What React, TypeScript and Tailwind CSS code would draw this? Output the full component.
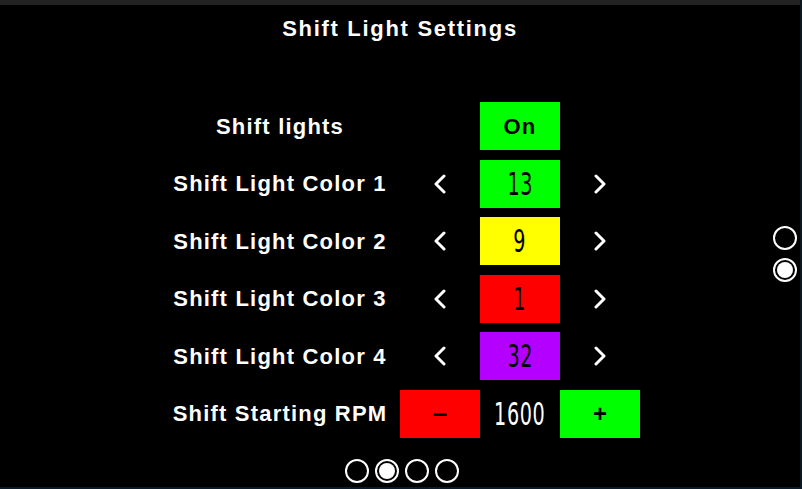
import React from "react";

const Chevron = ({ dir }: { dir: "left" | "right" }) => (
  <svg width="14" height="20" viewBox="0 0 14 20" className="block">
    <polyline
      points={dir === "left" ? "11,2 3,10 11,18" : "3,2 11,10 3,18"}
      fill="none"
      stroke="white"
      strokeWidth="3"
      strokeLinecap="round"
      strokeLinejoin="round"
    />
  </svg>
);

const Seg = ({ v, white }: { v: string; white?: boolean }) => (
  <span
    className={`inline-block scale-x-[0.6] text-[32px] leading-none font-normal tracking-[1px] ${white ? "text-white" : "text-black"}`}
    style={{ fontFamily: '"DejaVu Sans", sans-serif' }}
  >
    {v}
  </span>
);

const rows = [
  { label: "Shift Light Color 1", value: "13", bg: "bg-[#00ff00]" },
  { label: "Shift Light Color 2", value: "9", bg: "bg-[#ffff00]" },
  { label: "Shift Light Color 3", value: "1", bg: "bg-[#ff0000]" },
  { label: "Shift Light Color 4", value: "32", bg: "bg-[#b300ff]" },
];

const labelCls =
  "flex items-center justify-center text-white text-[22px] font-bold tracking-[1.2px]";

export default function App() {
  return (
    <div
      className="w-[802px] h-[489px] flex flex-col bg-[#0a1826] overflow-hidden"
      style={{ fontFamily: '"Liberation Sans", Arial, sans-serif' }}
    >
      <div className="flex h-[487px]">
        <div className="w-[800px] h-[487px] bg-black relative flex flex-col items-center">
          <div className="h-[5px] w-full bg-[#222222]" />
          <h1 className="mt-[13px] text-[22px] leading-[22px] font-bold text-white tracking-[1.7px]">
            Shift Light Settings
          </h1>
          <div className="mt-[62px] grid grid-cols-[240px_80px_80px_80px] grid-rows-[repeat(6,48px)] gap-y-[9.6px]">
            <div className={labelCls}>Shift lights</div>
            <div />
            <div className="bg-[#00ff00] flex items-center justify-center text-black text-[22px] font-bold tracking-[1.2px]">
              On
            </div>
            <div />
            {rows.map((r) => (
              <React.Fragment key={r.label}>
                <div className={labelCls}>{r.label}</div>
                <div className="flex items-center justify-center">
                  <Chevron dir="left" />
                </div>
                <div className={`${r.bg} flex items-center justify-center`}>
                  <Seg v={r.value} />
                </div>
                <div className="flex items-center justify-center">
                  <Chevron dir="right" />
                </div>
              </React.Fragment>
            ))}
            <div className={labelCls}>Shift Starting RPM</div>
            <div className="bg-[#ff0000] flex items-center justify-center text-black text-[26px] font-bold">
              –
            </div>
            <div className="flex items-center justify-center">
              <Seg v="1600" white />
            </div>
            <div className="bg-[#00ff00] flex items-center justify-center text-black text-[24px] font-bold">
              +
            </div>
          </div>
          <div className="mt-[21px] ml-[4px] flex gap-[6px]">
            <div className="w-[24px] h-[24px] rounded-full border-2 border-white" />
            <div className="w-[24px] h-[24px] rounded-full border-2 border-white flex items-center justify-center">
              <div className="w-[16px] h-[16px] rounded-full bg-white" />
            </div>
            <div className="w-[24px] h-[24px] rounded-full border-2 border-white" />
            <div className="w-[24px] h-[24px] rounded-full border-2 border-white" />
          </div>
          <div className="absolute left-[773px] top-[226px] flex flex-col gap-[8px]">
            <div className="w-[24px] h-[24px] rounded-full border-2 border-white" />
            <div className="w-[24px] h-[24px] rounded-full border-2 border-white flex items-center justify-center">
              <div className="w-[16px] h-[16px] rounded-full bg-white" />
            </div>
          </div>
        </div>
        <div className="w-[2px] bg-[#0c1820]" />
      </div>
      <div className="h-[2px] bg-[#0a1a2a]" />
    </div>
  );
}
